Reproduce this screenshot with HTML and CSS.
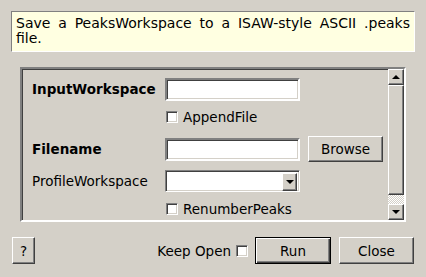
FILE: index.html
```html
<!DOCTYPE html>
<html lang="en">
<head>
  <meta charset="UTF-8" />
  <title>SaveIsawPeaks</title>
  <link rel="stylesheet" href="styles.css">
</head>
<body>
  <div class="dialog">
    <div class="summary">Save a PeaksWorkspace to a ISAW-style ASCII .peaks file.</div>
    <div class="frame">
      <div class="viewport">
        <div class="form">
          <label class="name bold">InputWorkspace</label>
          <div class="field"><div class="textbox"></div></div>
          <div></div>

          <div></div>
          <div class="field check"><span class="checkbox"></span>AppendFile</div>
          <div></div>

          <label class="name bold">Filename</label>
          <div class="field"><div class="textbox"></div></div>
          <div class="field"><button class="btn browse">Browse</button></div>

          <label class="name">ProfileWorkspace</label>
          <div class="field">
            <div class="combo"><span class="combo-arrow raised"><i class="tri down"></i></span></div>
          </div>
          <div></div>

          <div></div>
          <div class="field check"><span class="checkbox"></span>RenumberPeaks</div>
          <div></div>
        </div>
      </div>
      <div class="scrollbar">
        <div class="sb-btn raised"><i class="tri up"></i></div>
        <div class="sb-handle raised"></div>
        <div class="sb-track"></div>
        <div class="sb-btn raised"><i class="tri down"></i></div>
      </div>
    </div>
    <div class="actions">
      <button class="btn help">?</button>
      <span class="spacer"></span>
      <span class="keep">Keep Open</span>
      <span class="checkbox"></span>
      <button class="btn default run">Run</button>
      <button class="btn close">Close</button>
    </div>
  </div>
</body>
</html>
```

FILE: styles.css
```css
body {
  margin: 0;
  background: #d4d0c8;
  font-family: 'DejaVu Sans', sans-serif;
  font-size: 13.5px;
  color: #000;
}
.dialog {
  padding: 11px;
}
.summary {
  background: #ffffe1;
  border: 1px solid;
  border-color: #808080 #fff #fff #808080;
  padding: 4px 4px 5px 4px;
  font-size: 14px;
  line-height: 15px;
  text-align: justify;
}
.frame {
  display: flex;
  margin: 15px 9px 0 9px;
  height: 151px;
  border: 2px solid;
  border-color: #808080 #fff #fff #808080;
  box-shadow: inset 1px 1px #404040;
}
.viewport {
  flex: 1;
  overflow: hidden;
}
.form {
  display: grid;
  grid-template-columns: 133px 135px 83px;
  grid-template-rows: 28px 28px 36px 28px 28px;
  padding: 6px 0 0 10px;
  align-items: center;
}
.name {
  white-space: nowrap;
}
.bold {
  font-weight: bold;
}
.field {
  display: flex;
  align-items: center;
}
.field .browse {
  margin-left: 8px;
}
.textbox {
  width: 131px;
  height: 19px;
  background: #fff;
  border: 2px solid;
  border-color: #808080 #fff #fff #808080;
  box-shadow: inset 1px 1px #404040, inset -1px -1px #d4d0c8;
}
.check {
  padding-left: 1px;
  gap: 5px;
}
.checkbox {
  display: inline-block;
  width: 12px;
  height: 12px;
  box-sizing: border-box;
  background: #fff;
  border: 1px solid;
  border-color: #808080 #fff #fff #808080;
  box-shadow: inset 1px 1px #404040, inset -1px -1px #d4d0c8;
}
.combo {
  width: 135px;
  height: 22px;
  box-sizing: border-box;
  background: #fff;
  border: 1px solid;
  border-color: #808080 #fff #fff #808080;
  box-shadow: inset 1px 1px #404040, inset -1px -1px #d4d0c8;
  padding: 2px;
  display: flex;
  justify-content: flex-end;
}
.combo-arrow {
  width: 15px;
  height: 18px;
  box-sizing: border-box;
  background: #d4d0c8;
  display: flex;
  align-items: center;
  justify-content: center;
}
.raised {
  border: 1px solid;
  border-color: #fff #404040 #404040 #fff;
  box-shadow: inset -1px -1px #808080;
}
.tri {
  width: 0;
  height: 0;
  border-left: 4px solid transparent;
  border-right: 4px solid transparent;
}
.tri.up {
  border-bottom: 4px solid #000;
}
.tri.down {
  border-top: 4px solid #000;
}
.scrollbar {
  width: 16px;
  display: flex;
  flex-direction: column;
}
.sb-btn {
  height: 16px;
  box-sizing: border-box;
  background: #d4d0c8;
  display: flex;
  align-items: center;
  justify-content: center;
}
.sb-handle {
  height: 110px;
  box-sizing: border-box;
  background: #d4d0c8;
}
.sb-track {
  flex: 1;
  background-image: conic-gradient(#fff 25%, #d4d0c8 0 50%, #fff 0 75%, #d4d0c8 0);
  background-size: 2px 2px;
}
.btn {
  font-family: 'DejaVu Sans', sans-serif;
  font-size: 13.5px;
  color: #000;
  background: #d4d0c8;
  border: 1px solid;
  border-color: #fff #404040 #404040 #fff;
  box-shadow: inset -1px -1px #808080;
  padding: 0;
}
.browse {
  width: 75px;
  height: 26px;
}
.actions {
  display: flex;
  align-items: center;
  margin: 15px 1px 0 1px;
  height: 27px;
}
.actions .btn {
  height: 27px;
}
.help {
  width: 23px;
}
.spacer {
  flex: 1;
}
.keep {
  margin-right: 5px;
}
.run {
  width: 76px;
  margin-left: 7px;
}
.btn.default {
  border: 1px solid #000;
  box-shadow: inset 1px 1px #fff, inset -1px -1px #404040, inset -2px -2px #808080;
}
.close {
  width: 75px;
  margin-left: 8px;
}
```
